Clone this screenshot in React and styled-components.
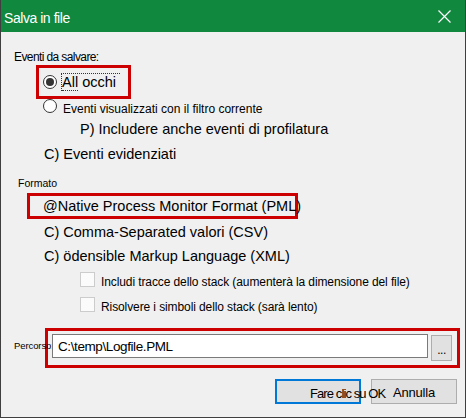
import styled, { createGlobalStyle } from 'styled-components';

const GlobalStyle = createGlobalStyle`
  html, body {
    margin: 0;
    padding: 0;
    background: #f0f0f0;
  }
  body {
    font-family: 'Liberation Sans', Arial, sans-serif;
    color: #000;
  }
`;

const Window = styled.div`
  width: 466px;
  height: 418px;
  box-sizing: border-box;
  border: 1px solid #3f3f3f;
  border-top: none;
  background: #f0f0f0;
  display: flex;
  flex-direction: column;
  overflow: hidden;
`;

const TitleBar = styled.div`
  height: 32px;
  flex: 0 0 32px;
  display: flex;
  align-items: center;
  justify-content: space-between;
  padding: 0 14px 0 3px;
  background: #10893e;
  color: #fff;
`;

const Title = styled.span`
  margin-top: 4px;
  font-size: 14px;
  letter-spacing: -0.45px;
`;

const Close = styled.svg`
  width: 13px;
  height: 13px;
  margin-top: 1px;
`;

const Body = styled.div`
  display: flex;
  flex-direction: column;
  align-items: flex-start;
`;

const Label = styled.div`
  margin: ${({ $top }) => $top}px 0 0 ${({ $left }) => $left}px;
  font-size: ${({ $size }) => $size || 12}px;
  line-height: ${({ $lh }) => $lh || 14}px;
  letter-spacing: ${({ $ls }) => $ls || 0}px;
  white-space: nowrap;
`;

const Option = styled.div`
  margin: ${({ $top }) => $top}px 0 0 ${({ $left }) => $left}px;
  font-size: 14.5px;
  line-height: 20px;
  white-space: nowrap;
`;

const Highlight = styled.div`
  box-sizing: border-box;
  margin: ${({ $top }) => $top}px 0 0 ${({ $left }) => $left}px;
  width: ${({ $w }) => $w}px;
  height: ${({ $h }) => $h}px;
  border: 3px solid #cc0000;
  display: flex;
  align-items: ${({ $align }) => $align || 'center'};
  padding: ${({ $pad }) => $pad};
  white-space: nowrap;
`;

const Radio = styled.span`
  box-sizing: border-box;
  flex: 0 0 14px;
  width: 14px;
  height: 14px;
  border: 1px solid #333;
  border-radius: 50%;
  background: #fff;
  display: flex;
  align-items: center;
  justify-content: center;

  &::after {
    content: '';
    display: ${({ $checked }) => ($checked ? 'block' : 'none')};
    width: 8px;
    height: 8px;
    border-radius: 50%;
    background: #333;
  }
`;

const Focus = styled.span`
  margin-left: 4px;
  display: inline-block;
  font-size: 14.5px;
  line-height: 16px;
  border-top: 1px dotted #333;
  border-left: 1px dotted #333;
  padding-right: 4px;

  b {
    font-weight: normal;
    display: inline-block;
    border-bottom: 1px dotted #333;
  }
`;

const RadioRow = styled.div`
  margin: ${({ $top }) => $top}px 0 0 ${({ $left }) => $left}px;
  height: 16px;
  display: flex;
  align-items: flex-start;
  white-space: nowrap;

  span + span {
    margin-left: 6px;
    padding-top: 3px;
    font-size: 12px;
    line-height: 14px;
  }
`;

const CheckRow = styled.div`
  margin: ${({ $top }) => $top}px 0 0 79px;
  height: 15px;
  display: flex;
  align-items: flex-start;
  white-space: nowrap;
  font-size: 12px;
  line-height: 14px;
`;

const Check = styled.span`
  box-sizing: border-box;
  flex: 0 0 15px;
  width: 15px;
  height: 15px;
  border: 1px solid #cccccc;
  background: #fbfbfb;
  margin-right: 6px;
`;

const CheckText = styled.span`
  padding-top: 3px;
  letter-spacing: -0.1px;
`;

const PathRow = styled.div`
  margin: 16px 0 0 13px;
  display: flex;
  align-items: flex-start;
`;

const PathLabel = styled.span`
  position: relative;
  z-index: 1;
  flex: 0 0 31px;
  width: 31px;
  margin-top: 12px;
  font-size: 9.5px;
  line-height: 12px;
  white-space: nowrap;
  letter-spacing: -0.1px;
`;

const PathInput = styled.div`
  position: relative;
  z-index: 2;
  box-sizing: border-box;
  width: 376px;
  height: 24px;
  border: 1px solid #7a7a7a;
  background: #fff;
  padding-left: 5px;
  font-size: 13.5px;
  line-height: 23px;
  letter-spacing: -0.4px;
`;

const Browse = styled.div`
  box-sizing: border-box;
  width: 21px;
  height: 26px;
  margin: 1px 0 0 3px;
  border: 1px solid #adadad;
  background: #e1e1e1;
  text-align: center;
  font-size: 12px;
  line-height: 28px;
  letter-spacing: -0.5px;
`;

const Buttons = styled.div`
  align-self: stretch;
  margin-top: 11px;
  padding-right: 8px;
  display: flex;
  justify-content: flex-end;
  gap: 10px;
`;

const Button = styled.div`
  position: relative;
  z-index: ${({ $primary }) => ($primary ? 1 : 0)};
  box-sizing: border-box;
  width: 86px;
  height: 25px;
  border: ${({ $primary }) => ($primary ? '2px solid #0078d7' : '1px solid #adadad')};
  background: #e1e1e1;
  font-size: 13px;
  line-height: 21px;
  padding-top: 2px;
  white-space: nowrap;
  text-align: ${({ $primary }) => ($primary ? 'left' : 'center')};
  padding-left: ${({ $primary }) => ($primary ? '33px' : '0')};
  letter-spacing: ${({ $primary }) => ($primary ? '-0.9px' : '-0.2px')};
`;

export default function App() {
  return (
    <>
      <GlobalStyle />
      <Window>
        <TitleBar>
          <Title>Salva in file</Title>
          <Close viewBox="0 0 13 13">
            <path d="M0.5 0.5 L12.5 12.5 M12.5 0.5 L0.5 12.5" stroke="#fff" strokeWidth="1.2" fill="none" />
          </Close>
        </TitleBar>
        <Body>
          <Label $top={18} $left={13} $ls={-0.6}>Eventi da salvare:</Label>
          <Highlight $top={1} $left={35} $w={95} $h={34} $pad="0 0 0 4px">
            <Radio $checked />
            <Focus>
              <b>All</b> occhi
            </Focus>
          </Highlight>
          <RadioRow $top={0} $left={42}>
            <Radio />
            <span>Eventi visualizzati con il filtro corrente</span>
          </RadioRow>
          <Option $top={4} $left={79}>P) Includere anche eventi di profilatura</Option>
          <Option $top={5} $left={43}>C) Eventi evidenziati</Option>
          <Label $top={13} $left={17} $size={10.5} $lh={12}>Formato</Label>
          <Highlight $top={4} $left={26} $w={271} $h={26} $pad="0 0 0 13px">
            <Option $top={0} $left={0}>@Native Process Monitor Format (PML)</Option>
          </Highlight>
          <Option $top={3} $left={43}>C) Comma-Separated valori (CSV)</Option>
          <Option $top={4} $left={43}>C) ödensible Markup Language (XML)</Option>
          <CheckRow $top={6}>
            <Check />
            <CheckText>Includi tracce dello stack (aumenterà la dimensione del file)</CheckText>
          </CheckRow>
          <CheckRow $top={10}>
            <Check />
            <CheckText>Risolvere i simboli dello stack (sarà lento)</CheckText>
          </CheckRow>
          <PathRow>
            <PathLabel>Percorso:</PathLabel>
            <Highlight $top={0} $left={0} $w={415} $h={40} $align="flex-start" $pad="3px 0 0 4px">
              <PathInput>C:\temp\Logfile.PML</PathInput>
              <Browse>...</Browse>
            </Highlight>
          </PathRow>
          <Buttons>
            <Button $primary>Fare clic su OK</Button>
            <Button>Annulla</Button>
          </Buttons>
        </Body>
      </Window>
    </>
  );
}
